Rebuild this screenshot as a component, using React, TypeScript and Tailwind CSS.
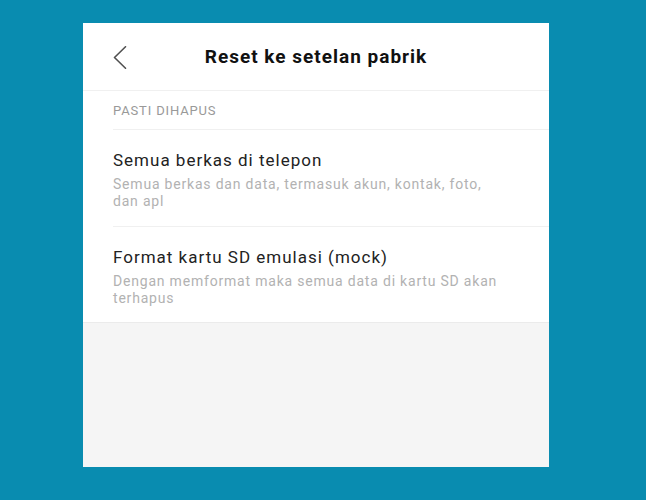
import React from "react";

export default function App() {
  const font = { fontFamily: "Roboto, 'Noto Sans', Arial, sans-serif" };
  return (
    <div className="w-[646px] h-[500px] bg-[#098cb0] pt-[23px] pl-[83px]" style={font}>
      <div className="w-[466px] h-[444px] bg-[#f5f5f5] flex flex-col">
        <div className="bg-white">
          <div className="relative h-[68px] flex items-center justify-center border-b border-[#f0f0f0]">
            <svg
              className="absolute left-[30px] top-[23px]"
              width="14"
              height="23"
              viewBox="0 0 14 23"
              fill="none"
            >
              <polyline
                points="12.5,0.8 1.5,11.5 12.5,22.2"
                stroke="#505050"
                strokeWidth="1.6"
                strokeLinecap="round"
                strokeLinejoin="round"
              />
            </svg>
            <span className="text-[19px] leading-[24px] font-bold tracking-[1px] text-[#111111]">
              Reset ke setelan pabrik
            </span>
          </div>
          <div className="ml-[30px] pt-[12px] pb-[10px] border-b border-[#f0f0f0]">
            <div className="text-[13px] leading-[16px] tracking-[0.85px] text-[#999999]">PASTI DIHAPUS</div>
          </div>
          <div className="ml-[30px] border-b border-[#f0f0f0] pt-[19px] pb-[16px]">
            <div className="text-[17px] leading-[22px] tracking-[1px] text-[#222222]">Semua berkas di telepon</div>
            <div className="mt-[5px] w-[392px] text-[14px] leading-[17px] tracking-[0.8px] text-[#b2b2b2]">
              Semua berkas dan data, termasuk akun, kontak, foto, dan apl
            </div>
          </div>
          <div className="ml-[30px] pt-[19px] pb-[15px]">
            <div className="text-[17px] leading-[22px] tracking-[1px] text-[#222222]">Format kartu SD emulasi (mock)</div>
            <div className="mt-[5px] w-[392px] text-[14px] leading-[17px] tracking-[0.8px] text-[#b2b2b2]">
              Dengan memformat maka semua data di kartu SD akan terhapus
            </div>
          </div>
        </div>
        <div className="flex-1 border-t border-[#ebebeb] bg-[#f5f5f5]" />
      </div>
    </div>
  );
}
